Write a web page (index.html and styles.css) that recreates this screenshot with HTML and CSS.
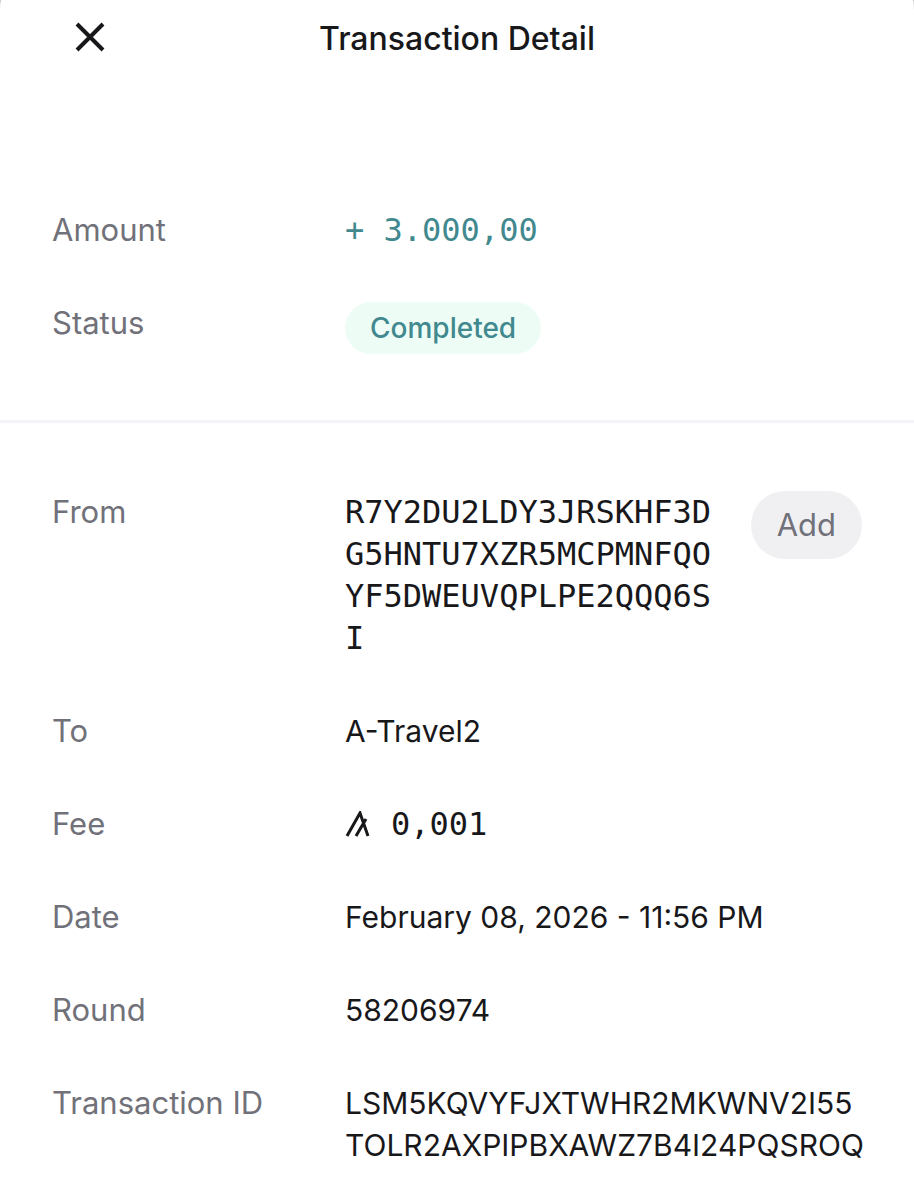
FILE: index.html
```html
<!DOCTYPE html>
<html lang="en">
<head>
<meta charset="utf-8">
<meta name="viewport" content="width=device-width, initial-scale=1">
<title>Transaction Detail</title>
<link rel="stylesheet" href="styles.css">
</head>
<body>
<main class="sheet">
  <header class="header">
    <button class="close" type="button" aria-label="Close">
      <svg viewBox="0 0 30 30" width="30" height="30" fill="none" stroke="currentColor" stroke-width="4" aria-hidden="true"><path d="M2 2 28 28M28 2 2 28"/></svg>
    </button>
    <h1 class="title">Transaction Detail</h1>
  </header>

  <dl class="details summary">
    <div class="row">
      <dt>Amount</dt>
      <dd class="mono positive">+ 3.000,00</dd>
    </div>
    <div class="row">
      <dt>Status</dt>
      <dd><span class="badge">Completed</span></dd>
    </div>
  </dl>

  <dl class="details">
    <div class="row">
      <dt>From</dt>
      <dd class="account">
        <span class="mono break">R7Y2DU2LDY3JRSKHF3DG5HNTU7XZR5MCPMNFQOYF5DWEUVQPLPE2QQQ6SI</span>
        <button class="add" type="button">Add</button>
      </dd>
    </div>
    <div class="row">
      <dt>To</dt>
      <dd>A-Travel2</dd>
    </div>
    <div class="row">
      <dt>Fee</dt>
      <dd class="mono fee">
        <svg viewBox="0 0 26 26" width="26" height="26" fill="none" stroke="currentColor" stroke-width="3" role="img" aria-label="Algo"><path d="M2 25 15 2 23 25M11 25 21 8"/></svg>
        <span>0,001</span>
      </dd>
    </div>
    <div class="row">
      <dt>Date</dt>
      <dd>February 08, 2026 - 11:56 PM</dd>
    </div>
    <div class="row">
      <dt>Round</dt>
      <dd>58206974</dd>
    </div>
    <div class="row">
      <dt>Transaction ID</dt>
      <dd>LSM5KQVYFJXTWHR2MKWNV2I55<wbr>TOLR2AXPIPBXAWZ7B4I24PQSROQ</dd>
    </div>
  </dl>
</main>
</body>
</html>
```
FILE: styles.css
```css
* {
  box-sizing: border-box;
}

body {
  margin: 0;
  background: #b4b4b4;
  color: #18181b;
  font-family: Inter, "Liberation Sans", sans-serif;
  font-size: 30px;
  line-height: 42px;
}

.sheet {
  min-height: 100vh;
  padding-bottom: 24px;
  background: #fff;
  border-radius: 1px 1px 0 0 / 10px 10px 0 0;
}

.header {
  display: grid;
  grid-template-columns: 52px 1fr 52px;
  align-items: start;
  padding: 18px 64px 0;
}

.close {
  display: flex;
  align-items: center;
  justify-content: center;
  height: 38px;
  padding: 0;
  border: 0;
  background: none;
  color: inherit;
}

.title {
  margin: 0;
  font-size: 32px;
  font-weight: 500;
  text-align: center;
}

.details {
  display: flex;
  flex-direction: column;
  gap: 51px;
  margin: 0;
  padding: 68px 52px 0;
}

.summary {
  padding-top: 149px;
  padding-bottom: 66px;
  border-bottom: 3px solid #f3f3f8;
}

.row {
  display: grid;
  grid-template-columns: 293px minmax(0, 1fr);
}

dt {
  color: #71717a;
  font-size: 31px;
}

dd {
  margin: 0;
}

.mono {
  font-family: "DejaVu Sans Mono", monospace;
  font-size: 32px;
}

.break {
  word-break: break-all;
}

.positive {
  color: #41898f;
}

.badge {
  display: inline-block;
  padding: 5px 25px;
  border-radius: 26px;
  background: #edfdf6;
  color: #41898f;
  font-size: 28px;
  font-weight: 500;
}

.account {
  display: grid;
  grid-template-columns: minmax(0, 1fr) auto;
  align-items: start;
  gap: 32px;
}

.add {
  padding: 13px 26px;
  border: 0;
  border-radius: 34px;
  background: #f0f0f2;
  color: #71717a;
  font: inherit;
  font-size: 31px;
}

.fee {
  display: flex;
  align-items: center;
  gap: 20px;
}
```
